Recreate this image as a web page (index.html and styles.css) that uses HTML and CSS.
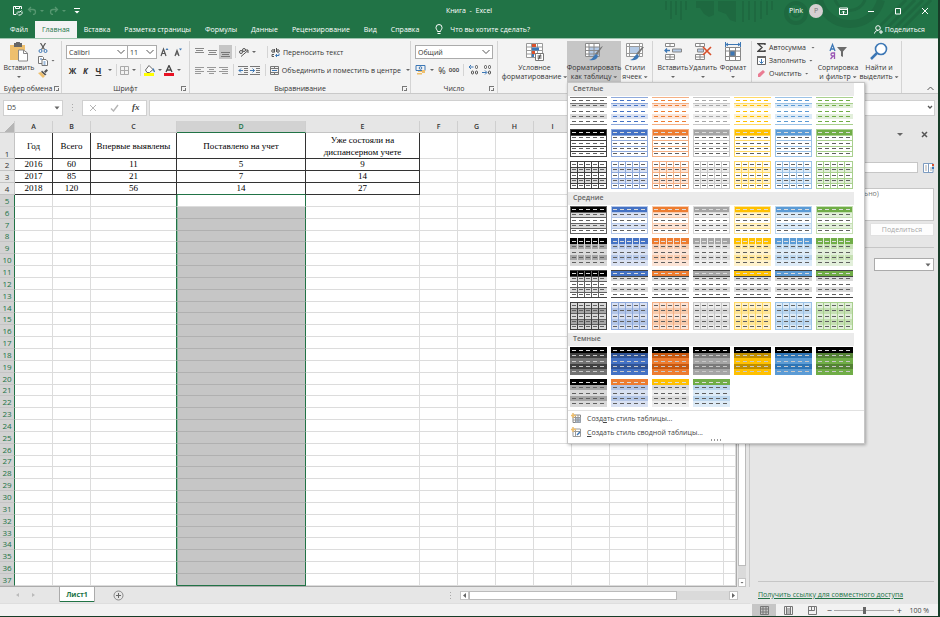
FILE: index.html
```html
<!DOCTYPE html>
<html lang="ru">
<head>
    <meta charset="UTF-8">
    <meta name="viewport" content="width=device-width, initial-scale=1.0">
    <title>Книга - Excel</title>
    <link rel="stylesheet" href="styles.css">
</head>
<body>
    <!-- Title bar and tabs -->
    <header class="top">
        <svg class="top-pattern" width="275" height="38" viewBox="0 0 275 38" fill="none" stroke="#1e6940">
            <path d="M3 1v9M8 1v18M13 1v14M18 1v19M23 1v9M80 1v21M86 1v19M92 1v21M98 1v18M104 1v14M109 1v9" stroke-width="2"/>
            <path d="M33 1h18v14l-5 2-5-3-4-6h-4zM55 1h18v21l-6-2-4-6-8-3z" fill="#1e6940" stroke="none"/>
            <circle cx="133" cy="13" r="10" stroke-width="4"/>
            <circle cx="133" cy="13" r="4" stroke-width="2"/>
            <path d="M156 0a32 32 0 0 0 62 0" stroke-width="8"/>
            <path d="M172 0a16 16 0 0 0 30 0" stroke-width="3"/>
            <path d="M216 27l27-27M224 28l28-28M232 28l28-28M240 28l28-28" stroke-width="3"/>
        </svg>
        <div class="title-bar">
            <div class="quick">
                <button aria-label="Сохранить"><svg width="11" height="11" viewBox="0 0 11 11" fill="none" stroke="#fff"><path d="M9.500 4V1.500h-8v8H4M3.500 1.500v2h4v-2"/><path d="M9.500 5.500L8 7H5.500M5 9.500v-2M10 6.500v2L8.500 10H6.500"/></svg></button>
                <button aria-label="Отменить"><svg width="18" height="9" viewBox="0 0 18 9" fill="none" stroke="#569770"><path d="M4 1L1.500 3.500 4 6M2 3.500h4a2 2 0 0 1 0 5" stroke-width="1.300"/><path d="M13 4h4l-2 2z" fill="#569770" stroke="none"/></svg></button>
                <button aria-label="Вернуть"><svg width="18" height="9" viewBox="0 0 18 9" fill="none" stroke="#569770"><path d="M6 1l2.500 2.500L6 6M8 3.500H4a2 2 0 0 0 0 5" stroke-width="1.300"/><path d="M13 4h4l-2 2z" fill="#569770" stroke="none"/></svg></button>
                <button aria-label="Настройка панели"><svg width="6" height="6" viewBox="0 0 6 6" fill="#fff"><path d="M0 0h6v1H0zM.5 3h5L3 5.500z"/></svg></button>
            </div>
            <div class="title">Книга&nbsp; -&nbsp; Excel</div>
            <div class="account">
                <span>Pink</span>
                <span class="avatar">P</span>
                <button class="win-btn" aria-label="Параметры ленты"><svg width="9" height="8" viewBox="0 0 9 8" fill="none" stroke="#fff"><path d="M.5 1h8v6.500h-8zM.5 2.500h8M4.500 7V4M3 5.500L4.500 4 6 5.500"/></svg></button>
                <button class="win-btn" aria-label="Свернуть"><svg width="8" height="8" viewBox="0 0 8 8" stroke="#fff"><path d="M1 4.500h6"/></svg></button>
                <button class="win-btn" aria-label="Развернуть"><svg width="8" height="8" viewBox="0 0 8 8" fill="none" stroke="#fff"><path d="M1.500 1.500h5v5.500h-5z"/></svg></button>
                <button class="win-btn" aria-label="Закрыть"><svg width="8" height="8" viewBox="0 0 8 8" stroke="#fff"><path d="M1 1l6 6M7 1L1 7"/></svg></button>
            </div>
        </div>
        <nav class="tabs">
            <a href="#">Файл</a>
            <a href="#" class="active">Главная</a>
            <a href="#">Вставка</a>
            <a href="#">Разметка страницы</a>
            <a href="#">Формулы</a>
            <a href="#">Данные</a>
            <a href="#">Рецензирование</a>
            <a href="#">Вид</a>
            <a href="#">Справка</a>
            <a href="#" class="tell-me"><svg width="8" height="11" viewBox="0 0 8 11" fill="none" stroke="#fff"><path d="M2.500 7.500C2.500 6 1 5.500 1 3.500a3 3 0 0 1 6 0c0 2-1.500 2.500-1.500 4zM2.500 9.500h3"/></svg>Что вы хотите сделать?</a>
            <a href="#" class="share"><svg width="9" height="9" viewBox="0 0 9 9" fill="none" stroke="#fff"><circle cx="4" cy="3" r="2.300"/><path d="M.5 8.500C1 6.500 2 5.500 4 5.500M5 7h4M7 5v4"/></svg>Поделиться</a>
        </nav>
    </header>

    <!-- Ribbon -->
    <section class="ribbon">
        <div class="group group-clipboard">
            <div class="group-body">
                <button class="big paste">
                    <svg width="20" height="20" viewBox="0 0 20 20"><path d="M1 3h15v15H1z" fill="#eebf6d"/><path d="M5 1h2a2 2 0 0 1 4 0h2v4H5z" fill="#666"/><path d="M9.500 8h5l4 3v8h-9z" fill="#fff" stroke="#888"/><path d="M14.500 8v3.500h4" fill="none" stroke="#888"/></svg>
                    <span>Вставить</span><i class="caret"></i>
                </button>
                <div class="stack">
                    <button aria-label="Вырезать"><svg width="10" height="10" viewBox="0 0 10 10" fill="none"><path d="M2.500 0l4 6.500M7.500 0l-4 6.500" stroke="#555" stroke-width="1.200"/><circle cx="2.500" cy="8" r="1.500" stroke="#3c77b5"/><circle cx="7.500" cy="8" r="1.500" stroke="#3c77b5"/></svg></button>
                    <button aria-label="Копировать"><svg width="10" height="10" viewBox="0 0 10 10" fill="#fff" stroke="#777"><path d="M.5.5h4l1 1v6h-5z"/><path d="M4 3.500h4l1.500 1.500v4.500H4z"/><path d="M2 3h2M5.500 6h2M5.500 8h2" stroke="#3c77b5"/></svg><i class="caret"></i></button>
                    <button aria-label="Формат по образцу"><svg width="10" height="9" viewBox="0 0 10 9"><path d="M6 2.500L8.500 0 10 1.500 7.500 4z" fill="#555"/><path d="M4 1.500l4.500 4-1.500 1L3 3z" fill="#555"/><path d="M0 4l3-1 4 4-2 2z" fill="#eebf6d"/></svg></button>
                </div>
            </div>
            <div class="group-label">Буфер обмена</div><i class="launcher"></i>
        </div>

        <div class="group group-font">
            <div class="rows">
                <div class="row">
                    <select class="picker font-name" aria-label="Шрифт"><option>Calibri</option></select><select class="picker font-size" aria-label="Размер"><option>11</option></select>
                    <button class="sized" aria-label="Увеличить шрифт"><svg width="9" height="10" viewBox="0 0 9 10" fill="none"><path d="M1 9l2.500-7L6 9M2 6.500h3" stroke="#555" stroke-width="1.200"/><path d="M5.500 3L7 1l1.500 2z" fill="#3c77b5"/></svg></button>
                    <button class="sized" aria-label="Уменьшить шрифт"><svg width="9" height="10" viewBox="0 0 9 10" fill="none"><path d="M1 9l2-5.500L5 9M2 7h2" stroke="#555" stroke-width="1.200"/><path d="M5 1.500L6.500 3.500 8 1.500z" fill="#3c77b5"/></svg></button>
                </div>
                <div class="row">
                    <button class="letter">Ж</button>
                    <button class="letter italic">К</button>
                    <button class="letter underline">Ч</button><i class="caret"></i>
                    <span class="split"></span>
                    <button aria-label="Границы"><svg width="9" height="9" viewBox="0 0 9 9" fill="none" stroke="#aaa"><path d="M.5.5h8v8h-8zM4.500.5v8M.5 4.500h8"/></svg></button><i class="caret"></i>
                    <span class="split"></span>
                    <button aria-label="Цвет заливки"><svg width="11" height="11" viewBox="0 0 11 11"><path d="M0 8h10v3H0z" fill="#ffff00"/><path d="M5 .5l4 4-3.500 3H3L1.500 5z" fill="#fff" stroke="#666"/><path d="M9 3.500L10.500 7" stroke="#3c77b5" stroke-width="1.300"/></svg></button><i class="caret"></i>
                    <button aria-label="Цвет текста"><svg width="10" height="11" viewBox="0 0 10 11" fill="none"><path d="M0 8h10v3H0z" fill="#e81123"/><path d="M2 7l3-6.500L8 7M3 5h4" stroke="#444" stroke-width="1.300"/></svg></button><i class="caret"></i>
                </div>
            </div>
            <div class="group-label">Шрифт</div><i class="launcher"></i>
        </div>

        <div class="group group-align">
            <div class="rows">
                <div class="row">
                    <button class="cell" aria-label="По верхнему краю"><svg width="9" height="9" viewBox="0 0 9 9" stroke="#888"><path d="M0 .5h9M1 2.500h7M0 4.500h9"/></svg></button>
                    <button class="cell" aria-label="По середине"><svg width="9" height="9" viewBox="0 0 9 9" stroke="#888"><path d="M0 2.500h9M1 4.500h7M0 6.500h9"/></svg></button>
                    <button class="cell on" aria-label="По нижнему краю"><svg width="9" height="9" viewBox="0 0 9 9" stroke="#777"><path d="M0 4.500h9M1 6.500h7M0 8.500h9"/></svg></button>
                    <span class="split"></span>
                    <button class="wide" aria-label="Ориентация"><svg width="10" height="10" viewBox="0 0 10 10" fill="none" stroke="#555"><circle cx="2" cy="5" r="1.500"/><circle cx="5" cy="3" r="1.500"/><path d="M2 9.500l7-6M9 6V3H6"/></svg><i class="caret"></i></button>
                    <span class="split far"></span>
                    <button class="labeled"><svg width="9" height="9" viewBox="0 0 9 9" fill="none" stroke="#555"><circle cx="2" cy="3" r="1.300"/><path d="M3.500 1v3.500M5.500 0v4"/><circle cx="7" cy="3" r="1.300"/><path d="M3 6.500H1v2h2"/><path d="M8 5.500v2H5M6 6L4.500 7.500 6 9" stroke="#3c77b5"/></svg>Переносить текст</button>
                </div>
                <div class="row">
                    <button class="cell" aria-label="По левому краю"><svg width="9" height="9" viewBox="0 0 9 9" stroke="#999"><path d="M0 1.500h9M0 3.500h6M0 5.500h9M0 7.500h6"/></svg></button>
                    <button class="cell" aria-label="По центру"><svg width="9" height="9" viewBox="0 0 9 9" stroke="#999"><path d="M0 1.500h9M2 3.500h5M0 5.500h9M2 7.500h5"/></svg></button>
                    <button class="cell" aria-label="По правому краю"><svg width="9" height="9" viewBox="0 0 9 9" stroke="#999"><path d="M0 1.500h9M3 3.500h6M0 5.500h9M3 7.500h6"/></svg></button>
                    <span class="split"></span>
                    <button class="cell" aria-label="Уменьшить отступ"><svg width="10" height="9" viewBox="0 0 10 9" fill="none" stroke="#777"><path d="M0 .5h10M6 2.500h4M6 4.500h4M6 6.500h4M0 8.500h10"/><path d="M5 4.500H1M3 2.500l-2 2 2 2" stroke="#3c77b5"/></svg></button>
                    <button class="cell" aria-label="Увеличить отступ"><svg width="10" height="9" viewBox="0 0 10 9" fill="none" stroke="#777"><path d="M0 .5h10M6 2.500h4M6 4.500h4M6 6.500h4M0 8.500h10"/><path d="M0 4.500h4.500M2.500 2.500l2 2-2 2" stroke="#3c77b5"/></svg></button>
                    <span class="split merge-split"></span>
                    <button class="labeled"><svg width="9" height="9" viewBox="0 0 9 9" fill="none" stroke="#777"><path d="M.5.5h8v8h-8zM.5 2.500h8M.5 6.500h8M4.500.5v2M4.500 6.500v2"/><path d="M2 4.500h5" stroke="#3c77b5"/></svg>Объединить и поместить в центре</button><i class="caret merge-caret"></i>
                </div>
            </div>
            <div class="group-label">Выравнивание</div><i class="launcher"></i>
        </div>

        <div class="group group-number">
            <div class="rows">
                <div class="row">
                    <select class="picker number-format" aria-label="Числовой формат"><option>Общий</option></select>
                </div>
                <div class="row">
                    <button aria-label="Финансовый формат"><svg width="11" height="10" viewBox="0 0 11 10" fill="none"><path d="M1 .5h9v5H1z" stroke="#3c77b5"/><circle cx="5.500" cy="3" r="1.300" stroke="#3c77b5"/><path d="M3 6h4v1H3zM2 8h5v1.500H2zM7 5h3v3H7z" fill="#eebf6d"/></svg></button><i class="caret"></i>
                    <button class="percent">%</button>
                    <button class="thousands">000</button>
                    <span class="split"></span>
                    <button class="digits" aria-label="Увеличить разрядность"><svg width="10" height="10" viewBox="0 0 10 10" fill="none" stroke="#555"><path d="M4.500 2H0M2 0L0 2l2 2" stroke="#3c77b5"/><rect x="6.500" y=".5" width="2" height="3" rx="1"/><rect x="2.500" y="6" width="2" height="3" rx="1"/><rect x="6.500" y="6" width="2" height="3" rx="1"/></svg></button>
                    <button class="digits" aria-label="Уменьшить разрядность"><svg width="10" height="10" viewBox="0 0 10 10" fill="none" stroke="#555"><rect x="2.500" y=".5" width="2" height="3" rx="1"/><rect x="6.500" y=".5" width="2" height="3" rx="1"/><rect x="6.500" y="6" width="2" height="3" rx="1"/><path d="M0 7.500h4.500M3 5.500l2 2-2 2" stroke="#3c77b5"/></svg></button>
                </div>
            </div>
            <div class="group-label">Число</div><i class="launcher"></i>
        </div>

        <div class="group group-styles">
            <div class="group-body">
                <button class="big conditional">
                    <svg width="20" height="20" viewBox="0 0 20 20" fill="none"><path d="M1.500 1.500h16v14h-16zM1.500 5h16M1.500 8.500h16M1.500 12h16M6.500 1.500v14M12.500 1.500v14" fill="#fff" stroke="#999"/><path d="M7 2h4v3H7zM7 9h3v3H7z" fill="#d9512c"/><path d="M7 5.500h7v3H7zM7 12h2v3H7z" fill="#3c77b5"/><path d="M10.500 11.500h8v7h-8z" fill="#fff" stroke="#777"/><path d="M12.500 14h4M12.500 16h4M15.500 12.500l-2 5" stroke="#444"/></svg>
                    <span>Условное<br>форматирование&nbsp;<i class="caret"></i></span>
                </button>
                <div class="dropdown">
                    <button class="big as-table pressed" aria-expanded="true">
                        <svg width="20" height="20" viewBox="0 0 20 20" fill="none"><path d="M1.500 1.500h14v13h-14z" fill="#fff"/><path d="M5 5h10v9H5z" fill="#b5cbe6"/><path d="M1.500 1.500h14v13h-14zM1.500 5h14M1.500 8.500h14M1.500 12h14M5 1.500v13M10 1.500v13" stroke="#8a8a8a"/><path d="M19 4l-6 9-2-1 6-7z" fill="#777"/><path d="M12 12l2 2c-1 4-5 5-9 4 4-1 4-4 7-6z" fill="#3c77b5"/></svg>
                        <span>Форматировать<br>как таблицу&nbsp;<i class="caret"></i></span>
                    </button>
                    <div class="gallery">
                        <h3>Светлые</h3>
                        <div class="swatches" data-tier="light"></div>
                        <h3>Средние</h3>
                        <div class="swatches" data-tier="medium"></div>
                        <h3>Темные</h3>
                        <div class="swatches" data-tier="dark"></div>
                        <div class="gallery-actions">
                            <button><svg width="10" height="10" viewBox="0 0 10 10" fill="none"><path d="M2 2h7.500v7.500H2z" fill="#fff" stroke="#888"/><path d="M4 4h5.500v5.500H4z" fill="#a9bdd4"/><path d="M2 4.500h7.500M2 7h7.500M4.500 2v7.500M7 2v7.500" stroke="#999"/><path d="M2 0v5M0 2.500h5" stroke="#eebf6d" stroke-width="1.500"/></svg><span>Созд<u>а</u>ть стиль таблицы...</span></button>
                            <button><svg width="10" height="10" viewBox="0 0 10 10" fill="none"><path d="M2 2h7.500v7.500H2zM2 4.500h7.500M4.500 2v7.500" fill="#fff" stroke="#999"/><path d="M6 8l3-3" stroke="#3c77b5" stroke-width="1.500"/><path d="M2 0v5M0 2.500h5" stroke="#eebf6d" stroke-width="1.500"/></svg><span><u>С</u>оздать стиль сводной таблицы...</span></button>
                        </div>
                        <div class="grip"><i></i><i></i><i></i><i></i></div>
                    </div>
                </div>
                <button class="big cell-styles">
                    <svg width="20" height="20" viewBox="0 0 20 20" fill="none"><path d="M1.500 1.500h16v13h-16zM1.500 4.500h16M1.500 11.500h16M4.500 1.500v13M14.500 1.500v13" fill="#fff" stroke="#999"/><path d="M5 5h9v6H5z" fill="#b5cbe6"/><path d="M19 5l-6 8-2-1 6-7z" fill="#777"/><path d="M12 12l2 2c-1 4-5 5-9 4 4-1 4-4 7-6z" fill="#3c77b5"/></svg>
                    <span>Стили<br>ячеек&nbsp;<i class="caret"></i></span>
                </button>
            </div>
        </div>

        <div class="group group-cells">
            <div class="group-body">
                <button class="big">
                    <svg width="20" height="20" viewBox="0 0 20 20" fill="none" stroke="#888"><path d="M2.500 1.500h9v3h-9zM7 1.500v3M2.500 12.500h9v5h-9zM2.500 15h9M7 12.500v5" fill="#fff"/><path d="M9.500 7h9v3h-9z" fill="#b5cbe6"/><path d="M7 8.500H2M4 6.500l-2 2 2 2" stroke="#3c77b5" stroke-width="1.300"/></svg>
                    <span>Вставить</span><i class="caret"></i>
                </button>
                <button class="big">
                    <svg width="20" height="20" viewBox="0 0 20 20" fill="none" stroke="#888"><path d="M2.500 1.500h9v3h-9zM7 1.500v3M2.500 12.500h9v5h-9zM2.500 15h9M7 12.500v5" fill="#fff"/><path d="M4.500 7h6v3h-6z" fill="#b5cbe6"/><path d="M10 5l8 8M18 5l-8 8" stroke="#d9512c" stroke-width="1.700"/></svg>
                    <span>Удалить</span><i class="caret"></i>
                </button>
                <button class="big">
                    <svg width="20" height="20" viewBox="0 0 20 20" fill="none" stroke="#888"><path d="M2.500 5.500h15v13h-15zM2.500 9h15M2.500 14.500h15M6.500 5.500v13M12.500 5.500v13" fill="#fff"/><path d="M7 9h5v5H7z" fill="#3c77b5"/><path d="M3 2.500h14M5 1L3 2.500 5 4M15 1l2 1.500L15 4M2.500 0v5M17.500 0v5" stroke="#3c77b5"/></svg>
                    <span>Формат</span><i class="caret"></i>
                </button>
            </div>
        </div>

        <div class="group group-editing">
            <div class="group-body">
                <div class="stack edit-stack">
                    <button><svg width="9" height="9" viewBox="0 0 9 9" fill="none" stroke="#444" stroke-width="1.400"><path d="M8 2V.7H1L5 4.500 1 8.300h7V7"/></svg>Автосумма<i class="caret sum-caret"></i></button>
                    <button><svg width="9" height="9" viewBox="0 0 9 9" fill="none"><path d="M.5.5h8v8h-8z" fill="#fff" stroke="#666"/><path d="M0 1h9" stroke="#666" stroke-width="2"/><path d="M4.500 3v4M2.500 5.500l2 2 2-2" stroke="#3c77b5"/></svg>Заполнить<i class="caret"></i></button>
                    <button><svg width="9" height="9" viewBox="0 0 9 9"><path d="M1 5l5-4 2 2-5 5H1z" fill="#ea7c93"/></svg>Очистить<i class="caret"></i></button>
                </div>
                <button class="big sort">
                    <svg width="20" height="20" viewBox="0 0 20 20" fill="none"><path d="M2 9l2.500-6.500L7 9M3 7h3" stroke="#3c77b5" stroke-width="1.300"/><path d="M6.500 17v-6H4.500a1.500 1.500 0 0 0 0 3h2M5 14l-2.500 3" stroke="#9a57b5" stroke-width="1.300"/><path d="M9 5h10l-4 4.500V15l-2-1V9.500z" fill="#6b6b6b"/></svg>
                    <span>Сортировка<br>и фильтр&nbsp;<i class="caret"></i></span>
                </button>
                <button class="big find">
                    <svg width="20" height="20" viewBox="0 0 20 20" fill="none" stroke="#3c77b5"><circle cx="12" cy="7" r="5.500" stroke-width="1.600" fill="#fff"/><path d="M8 11l-6 6" stroke-width="2.500"/></svg>
                    <span>Найти и<br>выделить&nbsp;<i class="caret"></i></span>
                </button>
            </div>
        </div>
        <button class="collapse" aria-label="Свернуть ленту"><svg width="7" height="5" viewBox="0 0 7 5" fill="none" stroke="#555"><path d="M.5 4l3-3 3 3"/></svg></button>
    </section>

    <!-- Formula bar -->
    <section class="formula-bar">
        <select class="name-box" aria-label="Имя"><option>D5</option></select>
        <span class="dots"></span>
        <div class="formula-buttons">
            <button aria-label="Отмена"><svg width="8" height="8" viewBox="0 0 8 8" stroke="#b5b5b5"><path d="M1 1l6 6M7 1L1 7"/></svg></button>
            <button aria-label="Ввод"><svg width="9" height="8" viewBox="0 0 9 8" fill="none" stroke="#b5b5b5" stroke-width="1.400"><path d="M1 4.500L3.500 7 8 1"/></svg></button>
            <button class="fx" aria-label="Вставить функцию">fx</button>
        </div>
        <div class="formula-input">
            <input type="text" aria-label="Строка формул">
            <svg width="6" height="5" viewBox="0 0 6 5" fill="none" stroke="#555" stroke-width="1.300"><path d="M1 1l2 2 2-2"/></svg>
        </div>
    </section>

    <main class="workspace">
        <div class="book">
            <div class="sheet-row">
                <div class="sheet">
                    <table class="grid">
                        <colgroup id="cols"></colgroup>
                        <thead id="letters"></thead>
                        <tbody id="data"></tbody>
                    </table>
                </div>
                <div class="v-scroll"><span class="thumb"></span><span class="track"></span><button aria-label="Вниз"><i class="caret"></i></button></div>
            </div>
            <div class="sheet-bar">
                <div class="sheet-nav">
                    <button aria-label="Предыдущий лист"><svg width="3" height="4" viewBox="0 0 3 4" fill="#bbb"><path d="M3 0v4L0 2z"/></svg></button>
                    <button aria-label="Следующий лист"><svg width="3" height="4" viewBox="0 0 3 4" fill="#bbb"><path d="M0 0v4l3-2z"/></svg></button>
                </div>
                <a href="#" class="sheet-tab">Лист1</a>
                <button class="add-sheet" aria-label="Новый лист"><svg width="11" height="11" viewBox="0 0 11 11" fill="none" stroke="#888"><circle cx="5.500" cy="5.500" r="4.500"/><path d="M5.500 3v5M3 5.500h5" stroke="#666"/></svg></button>
                <div class="h-scroll">
                    <span class="dots"></span>
                    <button aria-label="Влево"><svg width="3" height="5" viewBox="0 0 3 5" fill="#666"><path d="M3 0v5L0 2.500z"/></svg></button>
                    <span class="thumb"></span><span class="track"></span>
                    <button aria-label="Вправо"><svg width="3" height="5" viewBox="0 0 3 5" fill="#666"><path d="M0 0v5l3-2.500z"/></svg></button>
                </div>
            </div>
        </div>

        <!-- Sharing pane -->
        <aside class="pane">
            <div class="pane-head">
                <button aria-label="Параметры области"><i class="caret large"></i></button>
                <button aria-label="Закрыть область"><svg width="7" height="7" viewBox="0 0 7 7" stroke="#555" stroke-width="1.500"><path d="M1 1l5 5M6 1L1 6"/></svg></button>
            </div>
            <div class="pane-invite">
                <input type="text" aria-label="Пригласить пользователей">
                <button aria-label="Адресная книга"><svg width="11" height="10" viewBox="0 0 11 10" fill="#fff" stroke="#7d9cc0"><path d="M.5.500h9.500v9H.5zM5.500.5v9"/><path d="M2 3h2M2 5h2M2 7h2M7 5h2M7 7h2" stroke="#aaa"/><path d="M9 1h2v2H9z" fill="#d9512c" stroke="none"/><path d="M9 4h2v2H9z" fill="#3c77b5" stroke="none"/></svg></button>
            </div>
            <textarea class="pane-message" aria-label="Сообщение" placeholder="Сообщение (необязательно)"></textarea>
            <button class="pane-share" disabled>Поделиться</button>
            <hr>
            <select class="pane-access" aria-label="Доступ"><option></option></select>
            <div class="pane-foot"><a href="#">Получить ссылку для совместного доступа</a></div>
        </aside>
    </main>

    <footer class="status">
        <button class="view on" aria-label="Обычный"><svg width="9" height="9" viewBox="0 0 9 9" fill="none" stroke="#777"><path d="M.5.5h8v8h-8zM.5 3h8M.5 6h8M3 .5v8M6 .5v8"/></svg></button>
        <button class="view" aria-label="Разметка страницы"><svg width="9" height="9" viewBox="0 0 9 9" fill="none" stroke="#777"><path d="M.5.5h8v8h-8zM2.500 1v7.500M6.500 1v7.500M3 3h3M3 5h3M3 7h3"/></svg></button>
        <button class="view" aria-label="Страничный"><svg width="9" height="9" viewBox="0 0 9 9" fill="none" stroke="#777"><path d="M.5.5h8v8h-8zM3.500.5v4M.5 4.500h6M6.500.5v4"/></svg></button>
        <button class="zoom-btn" aria-label="Уменьшить">−</button>
        <input type="range" class="zoom" min="0" max="100" value="50" aria-label="Масштаб">
        <button class="zoom-btn" aria-label="Увеличить">+</button>
        <span class="zoom-value">100 %</span>
    </footer>

    <script src="script.js"></script>
</body>
</html>
```
FILE: styles.css
```css
:root {
    --green: #217346;
    --ribbon: #f3f3f3;
    --chrome: #e6e6e6;
    --line: #d4d4d4;
    --text: #444444;
}

* {
    margin: 0;
    padding: 0;
    box-sizing: border-box;
}

body {
    display: flex;
    flex-direction: column;
    height: 100vh;
    padding: 0 2px 1px 0;
    overflow: hidden;
    background-color: #173d28;
    font-family: "Open Sans", "Noto Sans", sans-serif;
    font-size: 7px;
    line-height: 9px;
    color: var(--text);
}

button, select, input, textarea {
    font: inherit;
    color: inherit;
    background: none;
    border: none;
    border-radius: 0;
    outline: none;
}

button {
    display: flex;
    align-items: center;
    justify-content: center;
}

a {
    color: inherit;
    text-decoration: none;
}

svg {
    display: block;
    flex: none;
}

/* Small drop-down arrow */
.caret {
    display: inline-block;
    flex: none;
    width: 4px;
    height: 2px;
    background-color: #666;
    clip-path: polygon(0 0, 100% 0, 50% 100%);
    vertical-align: middle;
}

.caret.large {
    width: 6px;
    height: 3px;
}

/* Header */
.top {
    position: relative;
    flex: none;
    background-color: var(--green);
    color: #fff;
}

.top-pattern {
    position: absolute;
    top: 0;
    right: 0;
}

.title-bar {
    position: relative;
    display: grid;
    grid-template-columns: 1fr auto 1fr;
    align-items: center;
    height: 21px;
    font-weight: 500;
}

.quick {
    display: flex;
    align-items: center;
    gap: 4px;
    padding-left: 12px;
}

.quick button:last-child {
    margin-left: 3px;
}

.account {
    display: flex;
    align-items: center;
    justify-content: flex-end;
}

.avatar {
    width: 14px;
    height: 14px;
    margin: 0 7px 0 6px;
    border-radius: 50%;
    background-color: #d6d0d2;
    color: #777;
    line-height: 14px;
    text-align: center;
}

.win-btn {
    width: 27px;
    height: 20px;
}

.tabs {
    position: relative;
    display: flex;
    height: 17px;
    padding-left: 3px;
}

.tabs a {
    padding: 0 7px;
    line-height: 17px;
    white-space: nowrap;
    font-weight: 500;
}

.tabs .active {
    background-color: var(--ribbon);
    color: var(--green);
}

.tabs .tell-me, .tabs .share {
    display: flex;
    align-items: center;
    gap: 7px;
    padding-left: 9px;
}

.tabs .share {
    gap: 2px;
    margin-left: auto;
    padding-right: 13px;
}

/* Ribbon */
.ribbon {
    display: flex;
    flex: none;
    height: 56px;
    padding-top: 2px;
    background-color: var(--ribbon);
    border-top: 1px solid #9dc4ae;
    border-bottom: 1px solid #c9c9c9;
    color: #333;
}

.group {
    display: grid;
    grid-template-columns: 8px 1fr 8px;
    grid-template-rows: 43px 9px;
    border-right: 1px solid var(--line);
}

.group-body, .rows {
    grid-column: 1 / -1;
    display: flex;
}

.rows {
    flex-direction: column;
    padding: 2px 0 0 4px;
}

.row {
    display: flex;
    align-items: center;
    height: 18px;
}

.group-label {
    grid-column: 2;
    text-align: center;
    white-space: nowrap;
}

.launcher {
    align-self: center;
    width: 5px;
    height: 5px;
    border-top: 1px solid #777;
    border-left: 1px solid #777;
    background: linear-gradient(#777, #777) 100% 100% / 3px 1px no-repeat, linear-gradient(#777, #777) 100% 100% / 1px 3px no-repeat;
}

.group-clipboard { width: 62px; grid-template-columns: 2px 1fr 7px; }
.group-font { width: 128px; }
.group-align { width: 221px; }
.group-number { width: 87px; }
.group-styles { width: 155px; }
.group-cells { width: 99px; }
.group-editing { width: 150px; }

.big {
    flex-direction: column;
    justify-content: flex-start;
    height: 41px;
    padding-top: 1px;
    text-align: center;
    white-space: nowrap;
}

.big span {
    margin-top: 1px;
}

.big > .caret {
    margin-top: 4px;
}

.paste {
    width: 38px;
}

.stack {
    display: flex;
    flex-direction: column;
    align-items: flex-start;
}

.stack button {
    height: 13px;
    gap: 3px;
}

.picker, .name-box, .pane-access {
    appearance: none;
    padding-left: 2px;
    background: #fff url("data:image/svg+xml,%3Csvg xmlns='http://www.w3.org/2000/svg' width='8' height='6' fill='none' stroke='%23555'%3E%3Cpath d='M.5 1l3.500 3.500L7.500 1'/%3E%3C/svg%3E") right 2px center no-repeat;
    border: 1px solid #ababab;
    height: 14px;
}

.font-name { width: 62px; }

.font-size {
    width: 30px;
    margin-left: -1px;
}

.number-format { width: 78px; }

.sized {
    width: 13px;
    margin-left: 1px;
}

.split {
    width: 1px;
    height: 12px;
    margin: 0 3px;
    background-color: var(--line);
}

.letter {
    width: 13px;
    font-size: 8px;
    font-weight: 700;
}

.italic { font-style: italic; }

.underline { text-decoration: underline; }

.group-font .caret {
    margin: 0 2px 0 3px;
}

.group-font .split {
    margin: 0 3px 0 2px;
}

.cell {
    width: 13px;
    height: 14px;
}

.group-align .rows {
    padding-left: 3px;
}

.group-align .split {
    margin: 0 3px;
}

.group-align .far {
    margin-left: 11px;
}

.group-align .merge-split {
    margin: 0 4px;
}

.cell.on {
    background-color: #c6c6c6;
}

.wide {
    gap: 3px;
}

.labeled {
    gap: 3px;
    white-space: nowrap;
}

.merge-caret {
    margin-left: 5px;
}

.group-number .caret {
    margin: 0 3px 0 4px;
}

.group-number .split {
    margin: 0 3px 0 2px;
}

.percent {
    width: 10px;
    font-size: 9px;
}

.thousands {
    width: 14px;
    font-weight: 600;
    font-size: 6px;
}

.digits {
    width: 13px;
}

.conditional {
    width: 69px;
    padding-left: 4px;
}

.as-table { width: 54px; }

.cell-styles { width: 28px; }

.pressed {
    background-color: #c6c6c6;
}

.group-cells .big {
    width: 30px;
}

.group-cells .group-body {
    padding-left: 5px;
}

.edit-stack {
    width: 64px;
    padding-left: 5px;
}

.edit-stack .sum-caret {
    margin-left: 2px;
}

.sort { width: 44px; }

.find { width: 38px; }

.collapse {
    align-self: flex-end;
    margin: 0 4px 2px auto;
}

/* Table style gallery */
.dropdown {
    position: relative;
}

.gallery {
    position: absolute;
    z-index: 5;
    top: 41px;
    left: 0;
    width: 298px;
    background-color: #fff;
    border: 1px solid #c6c6c6;
    box-shadow: 1px 1px 3px rgba(0, 0, 0, 0.3);
    color: var(--text);
}

.gallery h3 {
    height: 13px;
    margin-right: 10px;
    padding-left: 5px;
    background-color: #ebebeb;
    font-size: 7px;
    line-height: 12px;
    font-weight: 600;
    color: #666;
}

.swatches {
    display: grid;
    grid-template-columns: repeat(7, 37px);
    gap: 4px;
    padding: 1px 2px 3px;
}

.gallery-actions {
    display: flex;
    flex-direction: column;
    border-top: 1px solid #e1e1e1;
}

.gallery-actions button {
    justify-content: flex-start;
    gap: 6px;
    height: 14px;
    padding-left: 3px;
}

.grip {
    display: flex;
    justify-content: center;
    gap: 2px;
    height: 4px;
}

.grip i {
    width: 1px;
    height: 2px;
    background-color: #999;
}

/* Formula bar */
.formula-bar {
    display: flex;
    align-items: center;
    flex: none;
    height: 27px;
    padding: 0 3px;
    background-color: var(--chrome);
}

.formula-bar > * {
    height: 16px;
    border: 1px solid #d0d0d0;
}

.name-box, .pane-access {
    padding-left: 3px;
    background-image: url("data:image/svg+xml,%3Csvg xmlns='http://www.w3.org/2000/svg' width='6' height='4' fill='%23666'%3E%3Cpath d='M.5.5h5L3 3.500z'/%3E%3C/svg%3E");
}

.name-box {
    width: 60px;
}

.dots {
    width: 1px;
    height: 7px;
    border: none;
    background: repeating-linear-gradient(#aaa 0 1px, transparent 1px 3px);
}

.formula-bar .dots {
    height: 7px;
    margin: 0 9px;
    border: none;
}

.formula-buttons {
    display: flex;
    justify-content: space-around;
    width: 65px;
    background-color: #fff;
}

.fx {
    font-family: "Liberation Serif", serif;
    font-size: 9px;
    font-style: italic;
    font-weight: 700;
}

.formula-input {
    display: flex;
    flex: 1;
    align-items: center;
    margin-left: 2px;
    padding-right: 1px;
    background-color: #fff;
}

.formula-input input {
    flex: 1;
}

/* Sheet */
.workspace {
    display: flex;
    flex: 1;
    min-height: 0;
    background-color: var(--chrome);
}

.book {
    display: flex;
    flex: 1;
    flex-direction: column;
    min-width: 0;
}

.sheet-row {
    display: flex;
    flex: 1;
    min-height: 0;
}

.sheet {
    flex: 1;
    min-width: 0;
    border-right: 1px solid #ababab;
    border-bottom: 1px solid #ababab;
    background-color: #fff;
}

.grid {
    width: 100%;
    height: 100%;
    table-layout: fixed;
    border-collapse: separate;
    border-spacing: 0;
}

.col-head { width: 15px; }
.col-c { width: 86px; }
.col-d { width: 129px; }
.col-e { width: 114px; }
.col-std { width: 38px; }

.grid th {
    background-color: var(--chrome);
    border-right: 1px solid #c4c4c4;
    border-bottom: 1px solid #c4c4c4;
    font-size: 8px;
    line-height: 9px;
    font-weight: 500;
    text-align: center;
    color: #333;
}

.grid thead th {
    height: 12px;
    border-right-color: #cfcfcf;
    font-size: 7px;
    font-weight: 600;
}

.grid thead .corner {
    background: linear-gradient(135deg, var(--chrome) 62%, #b5b5b5 62%);
}

.grid thead .picked {
    background-color: #d2d2d2;
    border-bottom: 1px solid var(--green);
    color: var(--green);
}

.grid td {
    border-right: 1px solid #dcdcdc;
    border-bottom: 1px solid #dcdcdc;
    font-family: "Liberation Serif", serif;
    font-size: 9px;
    line-height: 9px;
    text-align: center;
    color: #000;
    white-space: nowrap;
}

.grid .row-title th, .grid .row-title td { height: 26px; }
.grid .row-title td { line-height: 12px; }
.grid .row-title th { vertical-align: bottom; }
.grid .row-record th, .grid .row-record td { height: 12px; }

.grid td.filled {
    border-color: #333;
}

.grid .row-picked th {
    background-color: #d2d2d2;
    border-right-color: var(--green);
    color: var(--green);
}

.grid .row-picked .before-range,
.grid .row-picked .range {
    border-right: 1px solid var(--green);
}

.grid .above-range td.range-top {
    border-bottom-color: var(--green);
}

.grid .row-picked .range {
    box-shadow: inset 1px 0 0 #8fbaa2;
}

.grid .shaded .range {
    background-color: #c6c6c6;
    border-bottom-color: #b0b0b0;
}

.grid tr:last-child .range {
    border-bottom-color: var(--green);
}

.v-scroll {
    display: flex;
    flex-direction: column;
    width: 13px;
    padding: 0 3px 0 1px;
    border-right: 1px solid #c9c9c9;
}

.v-scroll .thumb {
    flex: 1;
    background-color: #fff;
    border: 1px solid #bbb;
}

.v-scroll .track {
    height: 12px;
    background-color: #dadada;
}

.v-scroll button, .h-scroll button {
    width: 9px;
    height: 9px;
    background-color: #fff;
    border: 1px solid #c4c4c4;
}

.v-scroll button {
    width: auto;
}

.sheet-bar {
    display: flex;
    flex: none;
    align-items: center;
    height: 17px;
    padding-right: 12px;
    border-bottom: 1px solid #dedede;
}

.sheet-nav {
    display: flex;
    gap: 13px;
    width: 59px;
    padding-left: 16px;
}

.sheet-tab {
    align-self: flex-start;
    width: 36px;
    height: 15px;
    background-color: #fff;
    border: solid #ababab;
    border-width: 0 1px;
    box-shadow: inset 0 -1px 0 var(--green);
    color: var(--green);
    font-weight: 700;
    line-height: 15px;
    text-align: center;
}

.add-sheet {
    margin-left: 18px;
}

.h-scroll {
    display: flex;
    align-items: center;
    width: 288px;
    margin-left: auto;
}

.h-scroll .dots {
    margin-right: 9px;
}

.h-scroll .thumb {
    flex: 4;
    height: 9px;
    background-color: #fff;
    border: 1px solid #bbb;
}

.h-scroll .track {
    flex: 1;
    height: 9px;
    background-color: #dadada;
}

/* Sharing pane */
.pane {
    display: flex;
    flex-direction: column;
    width: 188px;
    padding: 0 4px 0 8px;
}

.pane-head {
    display: flex;
    justify-content: flex-end;
    gap: 18px;
    height: 41px;
    padding: 0 6px 14px 0;
}

.pane-invite {
    display: flex;
    gap: 5px;
}

.pane-invite input {
    flex: 1;
    height: 11px;
    background-color: #fff;
    border: 1px solid #c6c6c6;
}

.pane-message {
    height: 33px;
    margin-top: 15px;
    padding: 0 22px;
    background-color: #fff;
    border: 1px solid #c6c6c6;
    resize: none;
}

.pane-message::placeholder {
    color: #777;
}

.pane-share {
    align-self: flex-end;
    width: 64px;
    height: 13px;
    margin-top: 2px;
    background-color: #fdfdfd;
    border: 1px solid #e1e1e1;
    color: #a8a8a8;
}

.pane hr {
    margin: 11px 0 10px;
    border: none;
    border-top: 1px solid #c6c6c6;
}

.pane-access {
    align-self: flex-end;
    width: 60px;
    height: 13px;
}

.pane-foot {
    margin-top: auto;
    padding: 8px 0 5px;
    border-top: 1px solid #c6c6c6;
    color: var(--green);
}

.pane-foot a {
    text-decoration: underline;
}

/* Status bar */
.status {
    display: flex;
    flex: none;
    align-items: center;
    justify-content: flex-end;
    height: 12px;
    padding-right: 9px;
    background-color: #f2f2f2;
}

.view {
    width: 24px;
    height: 12px;
}

.view.on {
    background-color: #c6c6c6;
}

.zoom-btn {
    width: 10px;
    font-size: 9px;
}

.zoom {
    appearance: none;
    width: 60px;
    height: 9px;
    background: linear-gradient(#aaa, #aaa) center / 100% 1px no-repeat;
}

.zoom::-webkit-slider-thumb {
    appearance: none;
    width: 3px;
    height: 7px;
    background-color: #666;
}

.zoom-value {
    margin-left: 5px;
}
```
FILE: script.js
```js
// Theme colours, one entry per gallery column
const base = ['#000000', '#4472c4', '#ed7d31', '#a5a5a5', '#ffc000', '#5b9bd5', '#70ad47'];
const pale = ['#d9d9d9', '#d9e1f2', '#fce4d6', '#ededed', '#fff2cc', '#ddebf7', '#e2efda'];
const mid = ['#a6a6a6', '#b4c6e7', '#f8cbad', '#dbdbdb', '#ffe699', '#bdd7ee', '#c6e0b4'];
const soft = ['#404040', '#8ea9db', '#f4b084', '#c9c9c9', '#ffd966', '#9bc2e6', '#a9d08e'];
const deep = ['#404040', '#305496', '#c65911', '#7b7b7b', '#bf8f00', '#2f75b5', '#548235'];
const ink = '#606060';

const styles = {
    light: [
        i => ({ head: '#fff', odd: pale[i], even: '#fff', dash: i ? base[i] : ink, headDash: i ? base[i] : ink, edges: i ? soft[i] : '#777' }),
        i => ({ head: base[i], odd: '#fff', even: '#fff', dash: ink, headDash: '#ddd', rows: soft[i], frame: soft[i] }),
        i => ({ head: '#fff', odd: pale[i], even: '#fff', dash: ink, headDash: ink, rows: soft[i], cols: soft[i], frame: soft[i] })
    ],
    medium: [
        i => ({ head: base[i], odd: pale[i], even: '#fff', dash: ink, headDash: '#ddd', rows: i ? mid[i] : ink, frame: i ? mid[i] : ink }),
        i => ({ head: base[i], odd: mid[i], even: pale[i], dash: ink, headDash: '#ddd', cols: i ? pale[i] : '#d9d9d9' }),
        i => ({ head: base[i], odd: '#d9d9d9', even: '#fff', dash: ink, headDash: '#ddd', edges: '#444', rows: i ? '' : ink, cols: i ? '' : ink }),
        i => ({ head: pale[i], odd: mid[i], even: pale[i], dash: ink, headDash: ink, rows: i ? mid[i] : ink, cols: soft[i], frame: soft[i] })
    ],
    dark: [
        i => ({ head: '#000', odd: deep[i], even: i ? base[i] : '#737373', dash: '#c8c8c8', headDash: '#ddd' }),
        i => i > 3 ? null : ({ head: [base[0], base[2], base[4], base[6]][i], odd: mid[[0, 1, 3, 5][i]], even: pale[[0, 1, 3, 5][i]], dash: ink, headDash: '#ddd' })
    ]
};

function rect(x, y, w, h, fill) {
    return `<rect x="${x}" y="${y}" width="${w}" height="${h}" fill="${fill}"/>`;
}

// Draws one 37x28 table thumbnail
function swatch(s) {
    const tops = [0, 6, 11, 17, 22, 28];
    const dashes = [3, 8, 14, 19, 24];
    let out = '';
    for (let r = 0; r < 5; r++) {
        const fill = r === 0 ? s.head : (r % 2 ? s.odd : s.even);
        out += rect(0, tops[r], 37, tops[r + 1] - tops[r], fill);
        if (s.rows && r > 0) out += rect(0, tops[r], 37, 1, s.rows);
    }
    if (s.cols) {
        for (let c = 1; c < 5; c++) out += rect(c * 7, 0, 1, 28, s.cols);
    }
    if (s.edges) {
        out += rect(0, 0, 37, 1, s.edges) + rect(0, 27, 37, 1, s.edges);
        out += rect(0, 6, 37, 1, s.edges);
    }
    if (s.frame) out += `<rect x="0.5" y="0.5" width="36" height="27" fill="none" stroke="${s.frame}"/>`;
    for (let r = 0; r < 5; r++) {
        for (let c = 0; c < 5; c++) {
            out += rect(c * 7 + 2, dashes[r], 4, 1, r === 0 ? s.headDash : s.dash);
        }
    }
    return `<svg width="37" height="28" viewBox="0 0 37 28">${out}</svg>`;
}

document.querySelectorAll('.swatches').forEach(box => {
    styles[box.dataset.tier].forEach(make => {
        for (let i = 0; i < 7; i++) {
            const s = make(i);
            if (s) box.insertAdjacentHTML('beforeend', swatch(s));
        }
    });
});

// Sheet contents
const letters = 'ABCDEFGHIJKLMN'.split('');
const records = [
    ['Год', 'Всего', 'Впервые выявлены', 'Поставлено на учет', 'Уже состояли на<br>диспансерном учете'],
    ['2016', '60', '11', '5', '9'],
    ['2017', '85', '21', '7', '14'],
    ['2018', '120', '56', '14', '27']
];
const widths = { C: 'col-c', D: 'col-d', E: 'col-e', N: '' };

document.getElementById('cols').innerHTML = '<col class="col-head">' +
    letters.map(l => `<col class="${l in widths ? widths[l] : 'col-std'}">`).join('');

document.getElementById('letters').innerHTML = '<tr><th class="corner"></th>' +
    letters.map(l => `<th class="${l === 'D' ? 'picked' : ''}">${l}</th>`).join('') + '</tr>';

let rows = '';
for (let n = 1; n <= 37; n++) {
    const record = records[n - 1];
    let rowClass = n === 1 ? 'row-title' : 'row-record';
    if (n === 4) rowClass += ' above-range';
    if (n > 4) rowClass = 'row-picked';
    if (n > 5) rowClass += ' shaded';
    rows += `<tr class="${rowClass}"><th>${n}</th>`;
    letters.forEach((l, i) => {
        const names = [];
        if (record && i < 5) names.push('filled');
        if (l === 'C') names.push('before-range');
        if (l === 'D') names.push(n > 4 ? 'range' : 'range-top');
        rows += `<td class="${names.join(' ')}">${record && record[i] ? record[i] : ''}</td>`;
    });
    rows += '</tr>';
}
document.getElementById('data').innerHTML = rows;
```
